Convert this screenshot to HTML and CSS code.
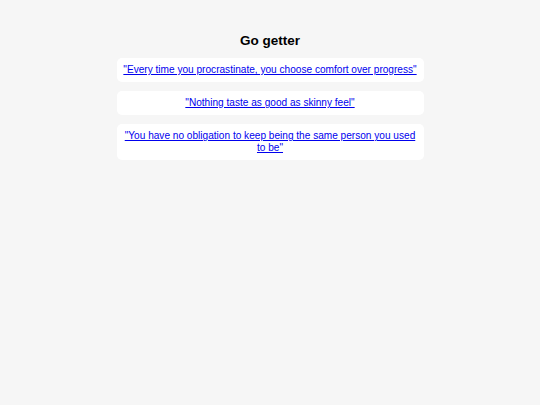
FILE: index.html
```html
<!DOCTYPE html>
<html>
<head>
<meta charset="utf-8">
<link rel="stylesheet" href="styles.css">
</head>
<body>
<main class="page">
  <h1 class="title">Go getter</h1>
  <div class="card"><a href="#">"Every time you procrastinate, you choose comfort over progress"</a></div>
  <div class="card"><a href="#">"Nothing taste as good as skinny feel"</a></div>
  <div class="card"><a href="#">"You have no obligation to keep being the same person you used to be"</a></div>
</main>
</body>
</html>
```
FILE: styles.css
```css
html, body {
  margin: 0;
  padding: 0;
  background: #f6f6f6;
  font-family: "Liberation Sans", Arial, sans-serif;
}
.page {
  width: 307px;
  margin: 0 auto;
  padding-top: 33px;
  display: flex;
  flex-direction: column;
  gap: 9px;
}
.title {
  margin: 0;
  font-size: 13.5px;
  line-height: 16px;
  font-weight: bold;
  text-align: center;
  color: #000;
}
.card {
  background: #fff;
  border-radius: 5px;
  padding: 6px;
  text-align: center;
  font-size: 10.1px;
  line-height: 12px;
}
.card a {
  color: #0000ee;
  text-decoration: underline;
}
```
